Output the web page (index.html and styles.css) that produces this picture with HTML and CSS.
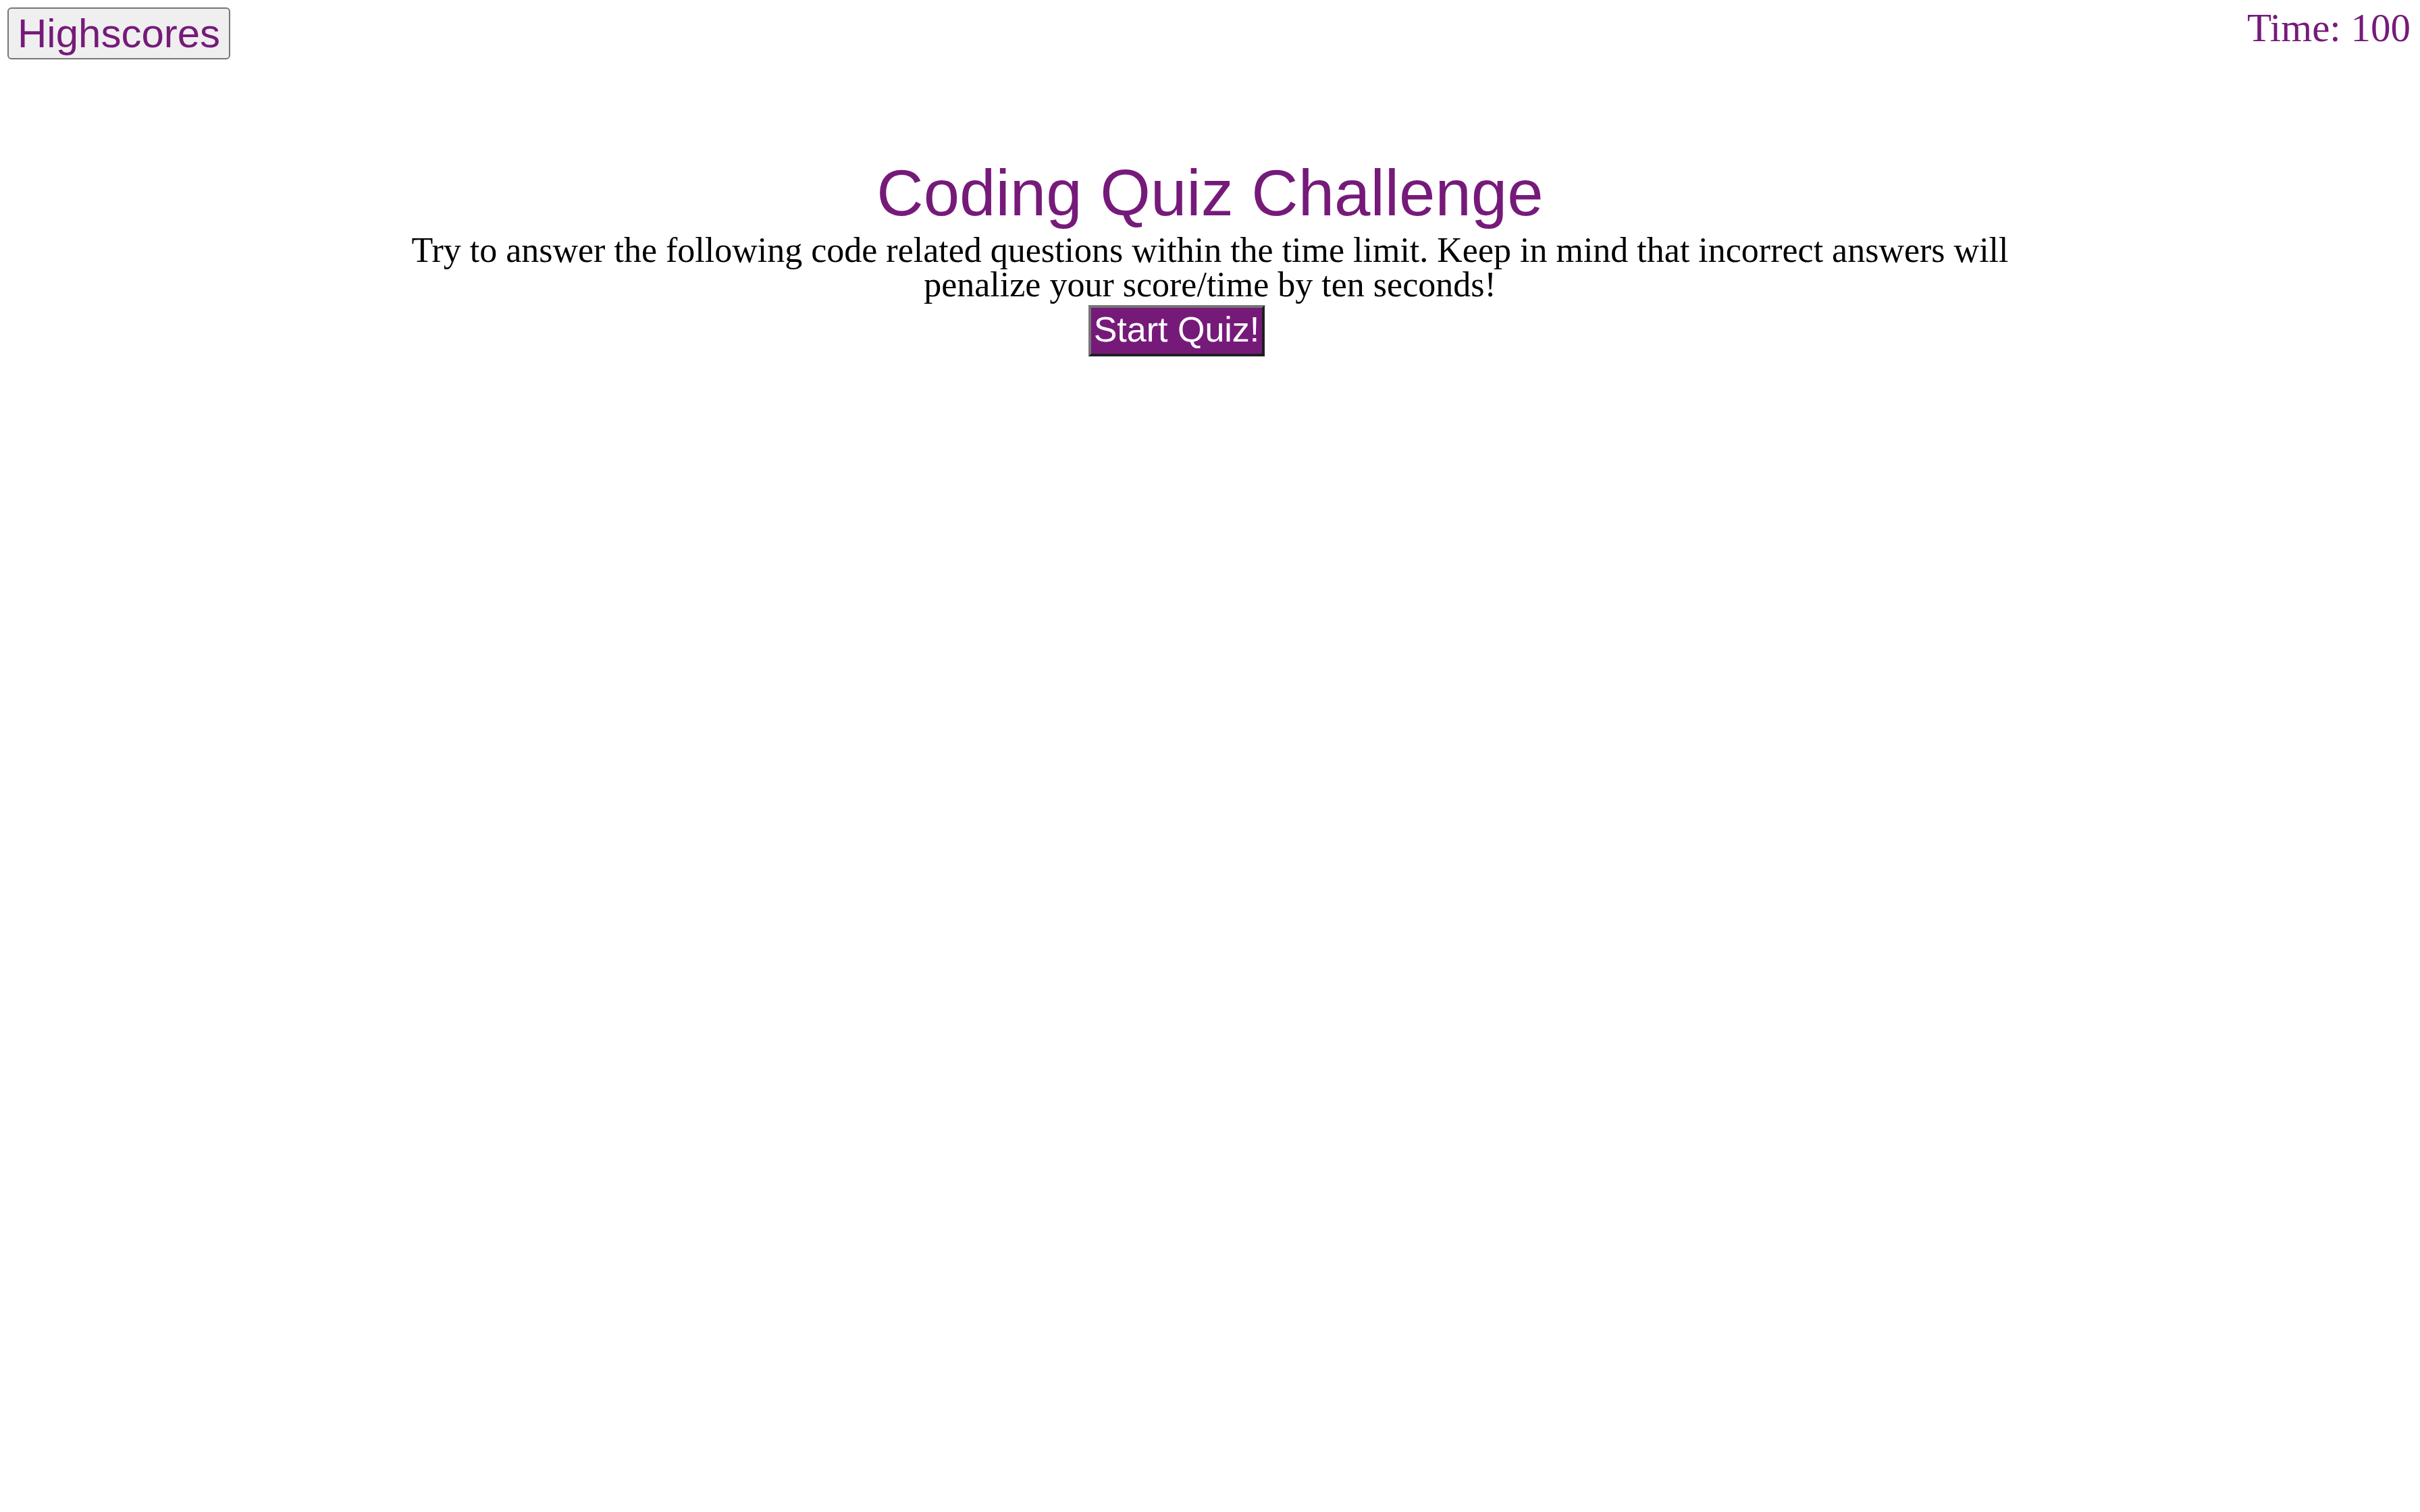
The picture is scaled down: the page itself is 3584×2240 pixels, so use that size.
FILE: index.html
```html
<!DOCTYPE html>
<html lang="en">
<head>
<meta charset="utf-8">
<title>Coding Quiz Challenge</title>
<link rel="stylesheet" href="styles.css">
</head>
<body>
<header class="topbar">
  <button class="highscores-btn" type="button">Highscores</button>
  <span class="timer">Time: 100</span>
</header>
<main class="intro">
  <h1 class="intro-title">Coding Quiz Challenge</h1>
  <p class="intro-text">Try to answer the following code related questions within the time limit. Keep in mind that incorrect answers will penalize your score/time by ten seconds!</p>
  <div class="start-row">
    <button class="start-btn" type="button">Start Quiz!</button>
  </div>
</main>
</body>
</html>
```

FILE: styles.css
```css
html, body {
  margin: 0;
  padding: 0;
  background: #ffffff;
}

body {
  font-family: "Liberation Serif", "Times New Roman", serif;
  color: #000000;
}

.topbar {
  display: flex;
  justify-content: space-between;
  align-items: flex-start;
  padding: 11px 14px 0 11px;
}

.highscores-btn {
  font-family: "Liberation Sans", Arial, sans-serif;
  font-size: 60px;
  line-height: 69px;
  color: #761a7a;
  background: #efefef;
  border: 2px solid #767676;
  border-radius: 6px;
  padding: 2px 13px;
  margin: 0;
  cursor: pointer;
}

.timer {
  font-family: "Liberation Serif", "Times New Roman", serif;
  font-size: 59px;
  line-height: 60px;
  color: #761a7a;
}

.intro {
  display: flex;
  flex-direction: column;
  align-items: center;
  text-align: center;
}

.intro-title {
  font-family: "Liberation Sans", Arial, sans-serif;
  font-weight: normal;
  font-size: 96px;
  line-height: 96px;
  color: #761a7a;
  margin: 150px 0 0 0;
}

.intro-text {
  width: 2450px;
  font-size: 52px;
  line-height: 51px;
  margin: 11px 0 0 0;
}

.start-row {
  margin-top: 5px;
}

.start-btn {
  font-family: "Liberation Sans", Arial, sans-serif;
  font-size: 52px;
  line-height: 60px;
  color: #ffffff;
  background: #761a7a;
  border-width: 4px;
  border-style: solid;
  border-color: #767676 #1f1f1f #1f1f1f #767676;
  border-radius: 0;
  padding: 2px 4px 6px 4px;
  margin: 0 99px 0 0;
  cursor: pointer;
}
```
